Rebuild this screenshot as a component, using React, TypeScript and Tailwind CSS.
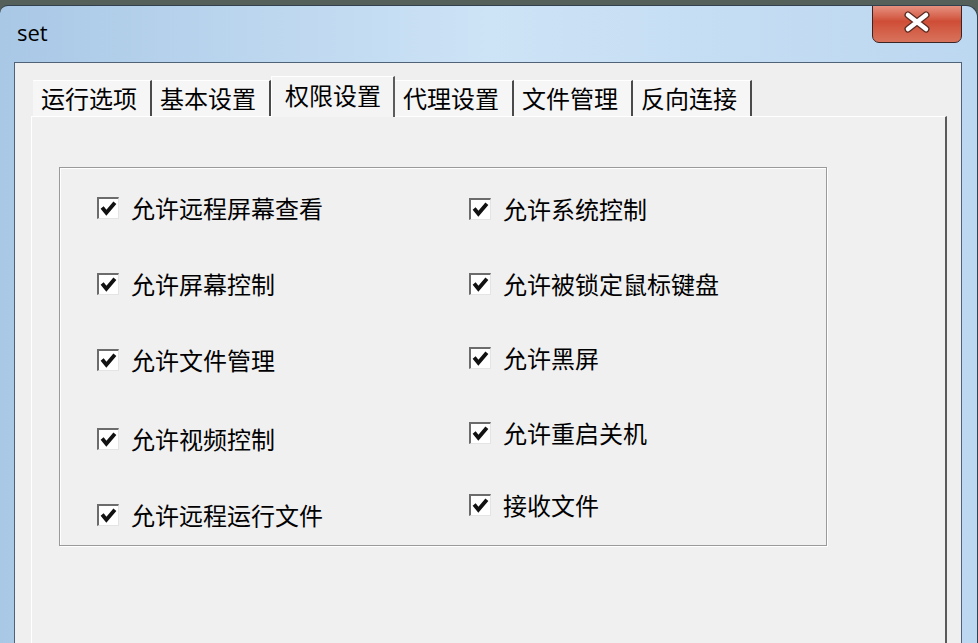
import React from 'react';

const leftItems = [
  { label: '允许远程屏幕查看', gap: 25 },
  { label: '允许屏幕控制', gap: 46 },
  { label: '允许文件管理', gap: 46 },
  { label: '允许视频控制', gap: 49 },
  { label: '允许远程运行文件', gap: 46 },
];
const rightItems = [
  { label: '允许系统控制', gap: 26 },
  { label: '允许被锁定鼠标键盘', gap: 45 },
  { label: '允许黑屏', gap: 44 },
  { label: '允许重启关机', gap: 45 },
  { label: '接收文件', gap: 42 },
];
const tabs = ['运行选项', '基本设置', '权限设置', '代理设置', '文件管理', '反向连接'];

const cjk = { fontFamily: '"Noto Sans CJK SC", "Noto Sans", sans-serif' };

function CheckItem({ label, gap }: { label: string; gap: number }) {
  return (
    <div className="flex items-center h-[30px]" style={{ marginTop: gap }}>
      <span className="w-[22px] h-[22px] bg-white border-t-2 border-l-2 border-b border-r border-t-[#6c6c6c] border-l-[#6c6c6c] border-b-[#e4e4e4] border-r-[#e4e4e4] flex items-center justify-center">
        <svg width="17" height="17" viewBox="0 0 16 16">
          <path d="M2 7 L6 12 L14 2.5" fill="none" stroke="#111" strokeWidth="3.6" strokeLinejoin="miter" />
        </svg>
      </span>
      <span className="ml-[12px] text-[24px] leading-none text-black" style={cjk}>
        {label}
      </span>
    </div>
  );
}

function CloseButton() {
  return (
    <div className="w-[90px] h-[43px] -mt-[6px] rounded-b-[7px] border border-[#3a2424] bg-gradient-to-b from-[#eba597] via-[#cf4d36] to-[#d8735c] flex items-center justify-center shadow-[inset_0_1px_0_rgba(255,255,255,0.6)]">
      <svg width="30" height="22" viewBox="0 0 30 22">
        <path d="M6 4 L24 18 M24 4 L6 18" stroke="#5a2a22" strokeWidth="7" strokeLinecap="round" />
        <path d="M6 4 L24 18 M24 4 L6 18" stroke="#ffffff" strokeWidth="4.5" strokeLinecap="round" />
      </svg>
    </div>
  );
}

export default function App() {
  return (
    <div className="w-[978px] h-[643px] overflow-hidden bg-[#56605a] pt-[5px] flex flex-col">
      <div className="flex-1 flex flex-col rounded-tl-[8px] rounded-tr-[12px] border-t border-r border-[#33404d] bg-gradient-to-r from-[#a9c8e6] via-[#cde3f6] to-[#bcd7f0] overflow-hidden">
        {/* title bar */}
        <div className="h-[56px] flex items-start justify-between pl-[17px] pr-[15px]">
          <span className="mt-[15px] text-[22px] leading-none text-black" style={{ fontFamily: '"Open Sans", "Noto Sans", sans-serif' }}>
            set
          </span>
          <CloseButton />
        </div>
        {/* client area */}
        <div className="flex-1 ml-[14px] mr-[15px] border-t border-l border-r border-[#4f6378] bg-[#efefef] flex flex-col pl-[16px] pr-[14px] pt-[13px]">
          {/* tabs */}
          <div className="flex items-end h-[40px] pl-[2px] relative z-10">
            {tabs.map((t, i) =>
              i === 2 ? (
                <div
                  key={t}
                  className="h-[41px] w-[124px] -mb-[1px] bg-[#f4f4f4] border-t border-l border-white border-r-2 border-r-[#5c5c5c] flex items-center pl-[13px] pb-[4px] text-[24px] leading-none text-black"
                  style={cjk}
                >
                  {t}
                </div>
              ) : (
                <div
                  key={t}
                  className="h-[36px] w-[119px] bg-[#f6f6f6] border-t border-white border-r-2 border-r-[#4a4a4a] flex items-center pl-[8px] pb-[2px] text-[24px] leading-none text-black"
                  style={cjk}
                >
                  {t}
                </div>
              )
            )}
          </div>
          {/* panel */}
          <div className="flex-1 bg-[#f0f0f0] border-t border-l border-white border-r-2 border-r-[#5a5a5a] pl-[27px] pt-[50px]">
            <div className="w-[768px] h-[379px] border border-[#9a9a9a] shadow-[inset_1px_1px_0_#ffffff,1px_1px_0_#ffffff] grid grid-cols-[372px_1fr] pl-[37px]">
              <div className="flex flex-col">
                {leftItems.map((l) => (
                  <CheckItem key={l.label} label={l.label} gap={l.gap} />
                ))}
              </div>
              <div className="flex flex-col">
                {rightItems.map((l) => (
                  <CheckItem key={l.label} label={l.label} gap={l.gap} />
                ))}
              </div>
            </div>
          </div>
        </div>
      </div>
    </div>
  );
}
